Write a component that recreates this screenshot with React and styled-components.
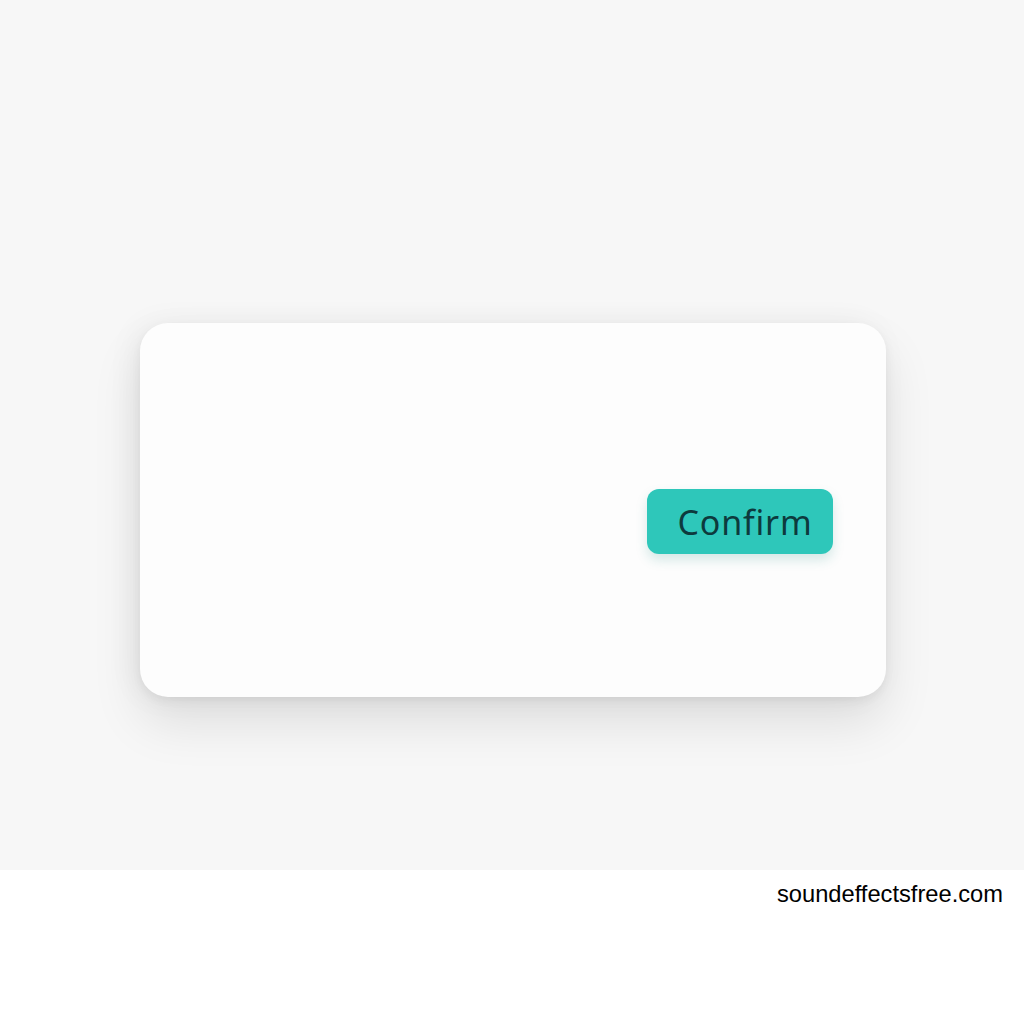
import styled, { createGlobalStyle } from 'styled-components'

const GlobalStyle = createGlobalStyle`
	html, body {
		margin: 0;
		padding: 0;
		background: #ffffff;
	}
`

const Stage = styled.div`
	height: 870px;
	background: #f7f7f7;
	padding-top: 323px;
	box-sizing: border-box;
	display: flex;
	justify-content: center;
`

const Card = styled.div`
	width: 746px;
	height: 374px;
	margin-left: 1px;
	box-sizing: border-box;
	background: #fdfdfd;
	border-radius: 28px;
	box-shadow: 0 26px 50px rgba(0, 0, 0, 0.1), 0 4px 10px rgba(0, 0, 0, 0.05),
		-6px 0 30px rgba(0, 0, 0, 0.05);
	display: flex;
	justify-content: flex-end;
	align-items: flex-start;
	padding: 166px 53px 0 0;
`

const ConfirmButton = styled.button`
	width: 186px;
	height: 65px;
	border: none;
	border-radius: 12px;
	background: #2ec7ba;
	color: #0d3a3d;
	font-family: 'Noto Sans', 'Open Sans', sans-serif;
	font-size: 34px;
	letter-spacing: 0.8px;
	padding: 0 0 0 11px;
	box-shadow: 0 6px 12px rgba(30, 140, 130, 0.18);
	cursor: pointer;
`

const Footer = styled.div`
	height: 154px;
	display: flex;
	justify-content: flex-end;
	align-items: flex-start;
	padding: 11px 21px 0 0;
	box-sizing: border-box;
`

const Credit = styled.span`
	font-family: 'Liberation Sans', Arial, sans-serif;
	font-size: 23.7px;
	color: #000000;
`

export default function App() {
	return (
		<>
			<GlobalStyle />
			<Stage>
				<Card>
					<ConfirmButton>Confirm</ConfirmButton>
				</Card>
			</Stage>
			<Footer>
				<Credit>soundeffectsfree.com</Credit>
			</Footer>
		</>
	)
}
